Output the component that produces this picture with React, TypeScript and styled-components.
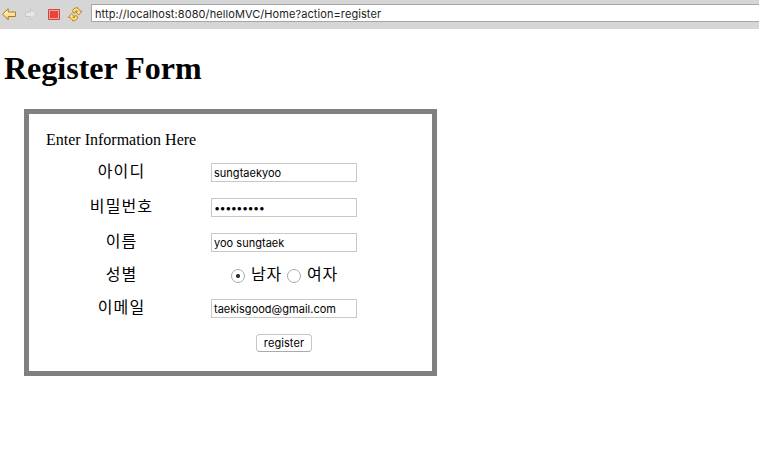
import React, { useState } from "react";
import styled, { createGlobalStyle } from "styled-components";

const GlobalStyle = createGlobalStyle`
  * { box-sizing: border-box; }
  html, body { margin: 0; background: #fff; overflow: hidden; }
`;

const Page = styled.div`
  height: 463px;
  overflow: hidden;
  color: #000;
  font: 16px "Liberation Serif", "Noto Sans CJK KR", serif;
`;

const Toolbar = styled.div`
  display: flex;
  height: 29px;
  background: #d6d6d6;
`;

const Tools = styled.div`
  display: flex;
  flex: 0 0 91px;
  height: 29px;
`;

const Address = styled.input`
  flex: 1;
  height: 18px;
  margin: 4px 0 0;
  padding: 1px 3px 0;
  border: 1px solid #a6a6a6;
  border-right: 0;
  border-radius: 0;
  outline: none;
  background: #fff;
  color: #1c1c1c;
  font: 11px Inter, sans-serif;
  letter-spacing: 0.08px;
`;

const Heading = styled.h1`
  margin: 20px 0 0 4px;
  font-size: 32px;
  line-height: 38px;
  font-weight: bold;
`;

const Panel = styled.form`
  width: 413px;
  height: 267px;
  margin: 22px 0 0 24px;
  padding: 17px;
  border: 5px solid #808080;
`;

const Intro = styled.div`
  height: 24px;
  line-height: 18px;
`;

const Row = styled.div<{ $height: number }>`
  display: grid;
  grid-template-columns: 150px 146px;
  column-gap: 15px;
  align-items: center;
  height: ${(p) => p.$height}px;
`;

const Korean = styled.span`
  font: 400 16px/20px "Noto Sans CJK KR", sans-serif;
  letter-spacing: 1.1px;
  white-space: nowrap;
`;

const Label = styled(Korean).attrs({ as: "label" })`
  padding: 0 0 6px 1px;
  text-align: center;
`;

const Field = styled.input`
  width: 146px;
  height: 19px;
  padding: 1px 2px 0;
  border: 1px solid #c8c8c8;
  border-radius: 0;
  outline: none;
  color: #000;
  font: 11px Inter, sans-serif;
  letter-spacing: 0.02px;
`;

const Dots = styled(Field)`
  letter-spacing: -0.6px;
`;

const Choices = styled.div`
  display: flex;
  align-items: center;
  padding-left: 20px;
`;

const Radio = styled.input`
  appearance: none;
  flex: none;
  width: 14px;
  height: 14px;
  margin: 1px 6px 0 0;
  border: 1px solid #aaa;
  border-radius: 50%;
  background: #fff;
  &:checked { background: radial-gradient(circle, #333 1.6px, #fff 2.4px); }
`;

const Choice = styled.label`
  display: flex;
  align-items: center;
  margin-right: 5px;
  ${Korean} { margin-top: -5px; letter-spacing: 0.8px; }
`;

const Submit = styled.button`
  grid-column: 2;
  justify-self: center;
  width: 56px;
  height: 18px;
  padding: 1px 0 0;
  border: 1px solid #c6c6c6;
  border-bottom-color: #aaa;
  border-radius: 4px;
  background: #fff;
  color: #000;
  font: 11px/15px Inter, sans-serif;
  letter-spacing: 0.08px;
`;

const ToolIcons = () => (
  <svg width="91" height="29" viewBox="0 0 91 29" strokeLinejoin="round">
    <defs>
      <linearGradient id="gold" x2="0" y2="1">
        <stop stopColor="#fffbe0" />
        <stop offset="1" stopColor="#f8cf62" />
      </linearGradient>
    </defs>
    <path d="M2.5 14.2 8.2 8.7V12h7.3v4.5H8.2v3.3Z" fill="url(#gold)" stroke="#b07a1c" />
    <path d="M36.5 14.2 30.8 8.7V12h-5.3v4.5h5.3v3.3Z" fill="#e6e6e4" stroke="#c5c8c5" />
    <rect x="48.5" y="9.5" width="11" height="10" fill="#f5a49c" stroke="#cf4640" />
    <rect x="50" y="11" width="8" height="7" fill="#e8443b" />
    <g fill="#fce08a" stroke="#b87f14" strokeWidth=".9">
      <path d="M72.6 12.2C72.4 9.6 74.2 7.7 77.6 7.6L77.9 9C79.3 9.2 80 10 80 11.2H81.9L78.9 14.9 75.6 11.9 77.4 11.5C77.2 10.5 76.3 10.3 75.6 11.3L75 13.2Z" />
      <path d="M77.7 16.4C77.9 19 76.1 20.9 72.7 21L72.4 19.6C71 19.4 70.3 18.6 70.3 17.4H68.4L71.4 13.7 74.7 16.7 72.9 17.1C73.1 18.1 74 18.3 74.7 17.3L75.3 15.4Z" />
    </g>
  </svg>
);

type Gender = "male" | "female";

const fields = {
  id: { label: "아이디", type: "text", value: "sungtaekyoo" },
  name: { label: "이름", type: "text", value: "yoo sungtaek" },
  email: { label: "이메일", type: "text", value: "taekisgood@gmail.com" },
};

const FieldRow = ({ name, height }: { name: keyof typeof fields; height: number }) => (
  <Row $height={height}>
    <Label htmlFor={name}>{fields[name].label}</Label>
    <Field id={name} type={fields[name].type} defaultValue={fields[name].value} spellCheck={false} />
  </Row>
);

export default function App() {
  const [gender, setGender] = useState<Gender>("male");
  return (
    <Page>
      <GlobalStyle />
      <Toolbar>
        <Tools><ToolIcons /></Tools>
        <Address defaultValue="http://localhost:8080/helloMVC/Home?action=register" spellCheck={false} />
      </Toolbar>
      <Heading>Register Form</Heading>
      <Panel onSubmit={(e) => e.preventDefault()}>
        <Intro>Enter Information Here</Intro>
        <FieldRow name="id" height={35} />
        <Row $height={35}>
          <Label htmlFor="password">비밀번호</Label>
          <Dots id="password" defaultValue="•••••••••" />
        </Row>
        <FieldRow name="name" height={35} />
        <Row $height={31}>
          <Label>성별</Label>
          <Choices>
            <Choice>
              <Radio type="radio" name="gender" checked={gender === "male"} onChange={() => setGender("male")} />
              <Korean>남자</Korean>
            </Choice>
            <Choice>
              <Radio type="radio" name="gender" checked={gender === "female"} onChange={() => setGender("female")} />
              <Korean>여자</Korean>
            </Choice>
          </Choices>
        </Row>
        <FieldRow name="email" height={35} />
        <Row $height={34}>
          <Submit>register</Submit>
        </Row>
      </Panel>
    </Page>
  );
}
